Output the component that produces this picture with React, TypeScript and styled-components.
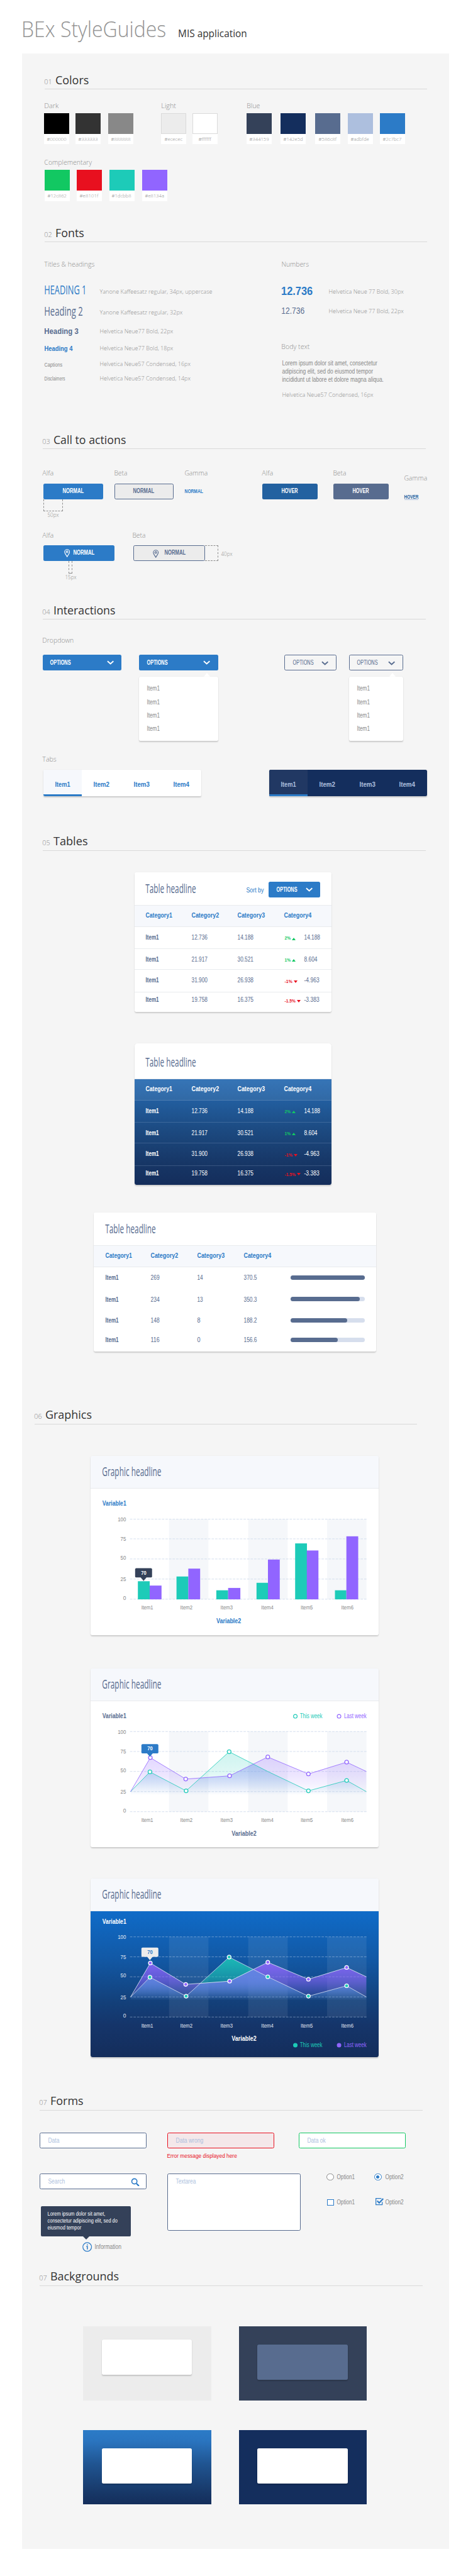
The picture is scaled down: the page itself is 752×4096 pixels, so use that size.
import React, { useLayoutEffect, useRef, useState } from "react";
import styled, { createGlobalStyle, css } from "styled-components";

/* ---------- tokens ---------- */

const c = {
  dark: "#344159",
  navy: "#142e5d",
  slate: "#586c8f",
  sky: "#adbfde",
  blue: "#2c7bc7",
  blueHover: "#2361a0",
  green: "#12c862",
  red: "#e8101f",
  teal: "#1dcbb8",
  violet: "#9165ff",
  ink: "#333333",
  gray: "#888888",
  label: "#8e8e8e",
  light: "#ececec",
  pale: "#f6f8fc",
  panel: "#f5f5f5",
};

const OPEN = '"Open Sans", sans-serif';
const HELV = '"Liberation Sans", Arial, sans-serif';
const PANEL_X = 56;
const shadow = "0 2px 3px rgba(0, 0, 0, 0.16), 0 0 2px rgba(0, 0, 0, 0.08)";

const Global = createGlobalStyle`
  html, body { margin: 0; padding: 0; background: #fff; }
  *, *::before, *::after { box-sizing: border-box; }
`;

/* ---------- text ---------- */

type Face = "open" | "helv";

interface TextProps {
  children: string;
  w: number;
  b: number;
  size?: number;
  ml?: number;
  color?: string;
  weight?: number;
  face?: Face;
}

/* The box ends on the text's baseline, so stacked lines are spaced baseline to baseline. */
const TextBox = styled.div<{
  $w: number;
  $b: number;
  $size: number;
  $ml: number;
  $color: string;
  $weight: number;
  $face: Face;
}>`
  flex: none;
  width: ${(p) => p.$w}px;
  height: ${(p) => p.$b}px;
  margin-left: ${(p) => p.$ml}px;
  line-height: ${(p) => 2 * (p.$b - (p.$face === "open" ? 0.388 : 0.3465) * p.$size)}px;
  font-family: ${(p) => (p.$face === "open" ? OPEN : HELV)};
  font-size: ${(p) => p.$size}px;
  font-weight: ${(p) => p.$weight};
  color: ${(p) => p.$color};
  white-space: nowrap;
`;

const Glyphs = styled.span`
  display: inline-block;
  transform-origin: 0 50%;
`;

/* Condenses the installed face to the width of the narrow cut; the shift takes up the first letter's side bearing. */
function Text({ children, w, b, size = 16, ml = 0, color = c.label, weight = 400, face = "open" }: TextProps) {
  const ref = useRef<HTMLSpanElement>(null);
  const [scale, setScale] = useState(1);
  useLayoutEffect(() => {
    const el = ref.current;
    if (!el || !el.parentElement) return;
    const box = el.parentElement.getBoundingClientRect().width;
    const own = el.getBoundingClientRect().width;
    if (own > 0) setScale((box / own) * scale * (1 + (0.04 * size) / w));
  }, [children, w]);
  const shift = -0.06 * size * scale;
  return (
    <TextBox $w={w} $b={b} $size={size} $ml={ml} $color={color} $weight={weight} $face={face}>
      <Glyphs ref={ref} style={{ transform: `translateX(${shift}px) scaleX(${scale})` }}>
        {children}
      </Glyphs>
    </TextBox>
  );
}

const Label = (p: TextProps) => <Text weight={300} {...p} />;
const Helv = (p: TextProps) => <Text face="helv" {...p} />;

/* ---------- page ---------- */

const Page = styled.main`
  zoom: ${752 / 1200};
  width: 1200px;
  height: 6535px;
  background: #fff;
`;

const PageHeader = styled.header`
  display: flex;
  align-items: flex-start;
  height: 136px;
  padding-left: 58px;
`;

const Panel = styled.div`
  width: 1084px;
  height: 6332px;
  margin-left: ${PANEL_X}px;
  padding-top: 47px;
  background: ${c.panel};
`;

const SectionBox = styled.section<{ $h: number }>`
  height: ${(p) => p.$h}px;
`;

const SectionHead = styled.div<{ $x: number }>`
  display: flex;
  align-items: flex-start;
  width: 971px;
  height: 44px;
  margin-left: ${(p) => p.$x - PANEL_X}px;
  border-bottom: 1px solid #d9d9d9;
`;

interface SectionProps {
  no: string;
  title: string;
  titleW: number;
  x: number;
  h: number;
  children: React.ReactNode;
}

function Section({ no, title, titleW, x, h, children }: SectionProps) {
  return (
    <SectionBox $h={h}>
      <SectionHead $x={x}>
        <Label w={19} b={31} size={18}>{no}</Label>
        <Text ml={10} w={titleW} b={31} size={29.5} color={c.ink}>{title}</Text>
      </SectionHead>
      {children}
    </SectionBox>
  );
}

const Row = styled.div<{ $x?: number; $h?: number; $mt?: number }>`
  display: flex;
  align-items: flex-start;
  padding-left: ${(p) => (p.$x ? p.$x - PANEL_X : 0)}px;
  margin-top: ${(p) => p.$mt ?? 0}px;
  ${(p) => p.$h && css`height: ${p.$h}px;`}
`;

const Column = styled.div<{ $w: number; $ml?: number; $mt?: number }>`
  flex: none;
  width: ${(p) => p.$w}px;
  margin-left: ${(p) => p.$ml ?? 0}px;
  margin-top: ${(p) => p.$mt ?? 0}px;
`;

/* ---------- colors ---------- */

const SwatchCard = styled.div<{ $gap: number }>`
  display: flex;
  flex: none;
  flex-direction: column;
  align-items: center;
  width: 64px;
  height: 79px;
  margin-left: ${(p) => p.$gap}px;
  background: #fff;
`;

const SwatchColor = styled.div<{ $color: string; $outlined: boolean }>`
  width: 64px;
  height: 53px;
  background: ${(p) => p.$color};
  border: ${(p) => (p.$outlined ? "1px solid #dadada" : "none")};
`;

interface SwatchDef {
  color: string;
  text?: string;
  w: number;
  gap?: number;
  outlined?: boolean;
}

const SwatchRow = styled.div`
  display: flex;
  margin-top: 13px;
`;

function Swatches({ label, labelW, items, w, ml = 0 }: { label: string; labelW: number; items: SwatchDef[]; w: number; ml?: number }) {
  return (
    <Column $w={w} $ml={ml}>
      <Label ml={1} w={labelW} b={16}>{label}</Label>
      <SwatchRow>
        {items.map((s) => (
          <SwatchCard key={s.color} $gap={s.gap ?? 0}>
            <SwatchColor $color={s.color} $outlined={!!s.outlined} />
            <Label w={s.w} b={18} size={12}>{s.text ?? s.color}</Label>
          </SwatchCard>
        ))}
      </SwatchRow>
    </Column>
  );
}

/* ---------- buttons ---------- */

type Kind = "alfa" | "beta" | "alfaHover" | "betaHover";

const kinds = {
  alfa: css`background: ${c.blue}; color: #fff;`,
  beta: css`background: ${c.light}; border: 1.6px solid ${c.slate};`,
  alfaHover: css`background: ${c.blueHover};`,
  betaHover: css`background: ${c.slate};`,
};

const ButtonBox = styled.button<{ $w: number; $kind: Kind }>`
  display: flex;
  align-items: flex-start;
  justify-content: center;
  width: ${(p) => p.$w}px;
  height: 40px;
  margin: 20px 0 0;
  padding: 0;
  border: 0;
  border-radius: 4px;
  ${(p) => kinds[p.$kind]}
`;

const PinSvg = styled.svg`
  flex: none;
  margin-top: 9px;
`;

const Pin = ({ color }: { color: string }) => (
  <PinSvg width="15" height="21" viewBox="0 0 15 21" fill="none" stroke={color} strokeWidth="1.8">
    <path d="M7.5 1.2C4 1.2 1.2 3.9 1.2 7.3c0 3.8 3.8 7.2 6.3 12.2 2.5-5 6.3-8.4 6.3-12.2 0-3.4-2.8-6.1-6.3-6.1z" />
    <circle cx="7.5" cy="7.2" r="2.3" />
  </PinSvg>
);

function Button({ kind, w, text, textW, pin, gap = 9 }: { kind: Kind; w: number; text: string; textW: number; pin?: boolean; gap?: number }) {
  const color = kind === "beta" ? c.slate : "#fff";
  const b = kind === "beta" ? 24 : 25;
  return (
    <ButtonBox $w={w} $kind={kind}>
      {pin && <Pin color={color} />}
      <Helv w={textW} b={b} size={16.5} weight={700} color={color} ml={pin ? gap : 0}>{text}</Helv>
    </ButtonBox>
  );
}

const GapBracket = styled.div<{ $w: number; $ml: number }>`
  width: ${(p) => p.$w}px;
  height: 31px;
  margin-left: ${(p) => p.$ml}px;
  border: 1px dashed ${c.label};
  border-top: 0;
`;

const HeightBracket = styled.div`
  flex: none;
  width: 33px;
  height: 40px;
  margin-top: 44px;
  border: 1px dashed ${c.label};
  border-left: 0;
`;

const LinkHover = styled.div`
  width: 36px;
  padding-bottom: 1px;
  border-bottom: 2px solid ${c.sky};
`;

/* ---------- dropdown ---------- */

const DropdownBox = styled.button<{ $w: number; $outline: boolean; $pad: number }>`
  display: flex;
  flex: none;
  align-items: flex-start;
  justify-content: space-between;
  width: ${(p) => p.$w}px;
  height: 40px;
  margin: 0;
  padding: 0 ${(p) => p.$pad}px 0 20px;
  border: ${(p) => (p.$outline ? `1.6px solid ${c.slate}` : "0")};
  border-radius: 4px;
  background: ${(p) => (p.$outline ? "transparent" : c.blue)};
`;

const ChevronSvg = styled.svg`
  flex: none;
  margin-top: 14px;
`;

function Dropdown({ w, outline = false, pad = 19 }: { w: number; outline?: boolean; pad?: number }) {
  const color = outline ? c.slate : "#fff";
  return (
    <DropdownBox $w={w} $outline={outline} $pad={pad}>
      <Helv w={52} b={outline ? 25 : 26} size={16} color={color} weight={outline ? 400 : 700}>OPTIONS</Helv>
      <ChevronSvg width="18" height="12" viewBox="0 0 18 12" fill="none" stroke={color} strokeWidth="3">
        <path d="M1.5 2 9 8.6 16.5 2" />
      </ChevronSvg>
    </DropdownBox>
  );
}

const MenuArrow = styled.div<{ $right: number }>`
  width: 0;
  height: 0;
  margin: 7px ${(p) => p.$right}px 0 auto;
  border: 9px solid transparent;
  border-top-width: 0;
  border-bottom: 11px solid #fff;
`;

const Menu = styled.div<{ $ml?: number }>`
  height: 163px;
  margin-left: ${(p) => p.$ml ?? 0}px;
  padding-left: 20px;
  border-radius: 4px;
  background: #fff;
  box-shadow: ${shadow};
`;

function OpenMenu({ right, ml }: { right: number; ml?: number }) {
  return (
    <>
      <MenuArrow $right={right} />
      <Menu $ml={ml}>
        {[36, 34, 34, 34].map((b, i) => (
          <Helv key={i} w={32} b={b} color={c.gray}>Item1</Helv>
        ))}
      </Menu>
    </>
  );
}

/* ---------- tabs ---------- */

const TabShadow = styled.div`
  flex: none;
  border-radius: 4px;
  box-shadow: ${shadow};
`;

const TabBar = styled.div<{ $dark: boolean }>`
  display: flex;
  width: 401px;
  height: 67px;
  overflow: hidden;
  border-radius: 4px;
  background: ${(p) => (p.$dark ? c.navy : "#fff")};
`;

const Tab = styled.div<{ $active: boolean; $dark: boolean }>`
  display: flex;
  align-items: flex-start;
  justify-content: center;
  width: ${(p) => (p.$active ? 98 : 101)}px;
  height: 67px;
  background: ${(p) => (p.$active ? (p.$dark ? "#213863" : c.pale) : "transparent")};
  border-bottom: ${(p) => (p.$active ? `6px solid ${c.blue}` : "0")};
`;

function Tabs({ dark = false }: { dark?: boolean }) {
  return (
    <TabShadow>
      <TabBar $dark={dark}>
        {["Item1", "Item2", "Item3", "Item4"].map((t, i) => (
          <Tab key={t} $active={i === 0} $dark={dark}>
            <Helv w={i === 0 ? 38 : 40} b={43} size={18} weight={700} color={dark ? c.sky : c.blue}>{t}</Helv>
          </Tab>
        ))}
      </TabBar>
    </TabShadow>
  );
}

/* ---------- tables ---------- */

const Card = styled.article<{ $x: number; $w: number; $mt: number; $top?: number }>`
  width: ${(p) => p.$w}px;
  margin: ${(p) => p.$mt}px 0 0 ${(p) => p.$x - PANEL_X}px;
  overflow: hidden;
  border-radius: ${(p) => p.$top ?? 5}px ${(p) => p.$top ?? 5}px 5px 5px;
  background: #fff;
  box-shadow: ${shadow};
`;

const CardHead = styled.div<{ $h: number; $tint?: boolean }>`
  display: flex;
  align-items: flex-start;
  height: ${(p) => p.$h}px;
  padding-left: 30px;
  background: ${(p) => (p.$tint ? c.pale : "#fff")};
  border-bottom: 1px solid #e9ebee;
`;

const HeadTools = styled.div`
  display: flex;
  align-items: flex-start;
  margin: 23px 0 0 127px;
`;

const TableBody = styled.div<{ $dark: boolean }>`
  background: ${(p) =>
    p.$dark ? "linear-gradient(#276bb2, #225e9f 20%, #1c4a81 48%, #173767 78%, #142d5b)" : "#fff"};
`;

const TableRow = styled.div<{ $h: number; $line: boolean; $head?: boolean; $dark: boolean }>`
  display: flex;
  align-items: flex-start;
  height: ${(p) => p.$h}px;
  padding-left: 30px;
  background: ${(p) => (p.$head ? (p.$dark ? "rgba(255,255,255,0.07)" : c.pale) : "transparent")};
  border-bottom: ${(p) =>
    p.$line ? `1px solid ${p.$dark ? "rgba(173,191,222,0.22)" : "#e9ebee"}` : "0"};
`;

const Cell = styled.div<{ $w: number }>`
  display: flex;
  flex: none;
  align-items: flex-start;
  width: ${(p) => p.$w}px;
`;

const Triangle = styled.div<{ $up: boolean; $mt: number }>`
  width: 0;
  height: 0;
  margin: ${(p) => p.$mt}px 0 0 3px;
  border: 5px solid transparent;
  ${(p) =>
    p.$up
      ? css`border-top-width: 0; border-bottom: 7px solid ${c.green};`
      : css`border-bottom-width: 0; border-top: 7px solid ${c.red};`}
`;

const categories = ["Category1", "Category2", "Category3", "Category4"];
const columnWidths = [115, 118, 118, 50];
const rowHeights = [55, 53, 57, 49];
const rowBaselines = [32, 32, 33, 25];

function HeadCells({ dark }: { dark: boolean }) {
  return (
    <TableRow $h={55} $line $head $dark={dark}>
      {categories.map((t, i) => (
        <Cell key={t} $w={columnWidths[i]}>
          <Helv w={i === 0 ? 67 : 69} b={31} size={17} weight={700} color={dark ? "#fff" : c.blue}>{t}</Helv>
        </Cell>
      ))}
    </TableRow>
  );
}

const trendRows = [
  { a: "12.736", b: "14.188", pct: "2%", pw: 15, up: true, v: "14.188", vw: 40 },
  { a: "21.917", b: "30.521", pct: "1%", pw: 15, up: true, v: "8.604", vw: 33 },
  { a: "31.900", b: "26.938", pct: "-1%", pw: 19, up: false, v: "-4.963", vw: 38 },
  { a: "19.758", b: "16.375", pct: "-1.5%", pw: 27, up: false, v: "-3.383", vw: 38 },
];

function TrendTable({ dark = false }: { dark?: boolean }) {
  const num = dark ? "#fff" : c.slate;
  return (
    <TableBody $dark={dark}>
      <HeadCells dark={dark} />
      {trendRows.map((r, i) => (
        <TableRow key={r.a} $h={rowHeights[i]} $line={i < 3} $dark={dark}>
          <Cell $w={115}><Helv w={33} b={rowBaselines[i]} weight={700} color={num}>Item1</Helv></Cell>
          <Cell $w={118}><Helv w={40} b={rowBaselines[i]} color={num}>{r.a}</Helv></Cell>
          <Cell $w={119}><Helv w={40} b={rowBaselines[i]} color={num}>{r.b}</Helv></Cell>
          <Cell $w={49}>
            <Helv w={r.pw} b={rowBaselines[i] + 1} size={12} weight={700} color={r.up ? c.green : c.red}>{r.pct}</Helv>
            <Triangle $up={r.up} $mt={rowBaselines[i] - 6} />
          </Cell>
          <Helv w={r.vw} b={rowBaselines[i]} color={num}>{r.v}</Helv>
        </TableRow>
      ))}
    </TableBody>
  );
}

const Track = styled.div<{ $mt: number }>`
  width: 187px;
  height: 11px;
  margin-top: ${(p) => p.$mt}px;
  border-radius: 6px;
  background: #d6deed;
`;

const Fill = styled.div`
  height: 11px;
  border-radius: 6px;
  background: ${c.slate};
`;

const barRows = [
  { a: "269", aw: 22, b: "14", bw: 14, v: "370.5", fill: 100 },
  { a: "234", aw: 22, b: "13", bw: 14, v: "350.3", fill: 93.3 },
  { a: "148", aw: 22, b: "8", bw: 7.5, v: "188.2", fill: 76.5 },
  { a: "116", aw: 22, b: "0", bw: 7.5, v: "156.6", fill: 63.8 },
];

function BarTable() {
  return (
    <TableBody $dark={false}>
      <HeadCells dark={false} />
      {barRows.map((r, i) => (
        <TableRow key={r.a} $h={rowHeights[i]} $line={false} $dark={false}>
          <Cell $w={115}><Helv w={33} b={rowBaselines[i]} weight={700} color={c.slate}>Item1</Helv></Cell>
          <Cell $w={118}><Helv w={r.aw} b={rowBaselines[i]} color={c.slate}>{r.a}</Helv></Cell>
          <Cell $w={118}><Helv w={r.bw} b={rowBaselines[i]} color={c.slate}>{r.b}</Helv></Cell>
          <Cell $w={119}><Helv w={33} b={rowBaselines[i]} color={c.slate}>{r.v}</Helv></Cell>
          <Track $mt={rowBaselines[i] - 12}>
            <Fill style={{ width: `${r.fill}%` }} />
          </Track>
        </TableRow>
      ))}
    </TableBody>
  );
}

/* ---------- charts ---------- */

const ChartSvg = styled.svg<{ $dark?: boolean }>`
  display: block;
  font-family: ${HELV};
  font-size: 15.5px;
  background: ${(p) =>
    p.$dark ? "linear-gradient(#0f6bc8, #1259a6 32%, #13407a 62%, #15356a 78%, #142d5b)" : "#fff"};
`;

interface LabelProps {
  x: number;
  y: number;
  w: number;
  color: string;
  size?: number;
  bold?: boolean;
  t: string;
}

const ChartText = ({ x, y, w, color, size = 15.5, bold, t }: LabelProps) => (
  <text x={x} y={y} fill={color} fontSize={size} fontWeight={bold ? 700 : 400} textLength={w} lengthAdjust="spacingAndGlyphs">
    {t}
  </text>
);

const axis = [
  { t: "100", w: 21 },
  { t: "75", w: 14 },
  { t: "50", w: 14 },
  { t: "25", w: 14 },
  { t: "0", w: 7.5 },
];
const itemX = [128.7, 227.6, 329.7, 433, 533, 636];

interface GridProps {
  lines: number[];
  labels: number[];
  itemY: number;
  text: string;
  line: string;
  band: string;
}

const Grid = ({ lines, labels, itemY, text, line, band }: GridProps) => (
  <g>
    {[199, 400, 600].map((x) => (
      <rect key={x} x={x} y={lines[0]} width="100" height={lines[4] - lines[0]} fill={band} />
    ))}
    {lines.map((y) => (
      <path key={y} d={`M100 ${y}H700`} stroke={line} strokeWidth="1.4" strokeDasharray="6 3" />
    ))}
    {axis.map((a, i) => (
      <ChartText key={a.t} x={90 - a.w} y={labels[i]} w={a.w} color={text} t={a.t} />
    ))}
    {itemX.map((x, i) => (
      <ChartText key={x} x={x} y={itemY} w={i ? 31 : 30} color={text} t={`Item${i + 1}`} />
    ))}
  </g>
);

const Bubble = ({ x, y, fill, color }: { x: number; y: number; fill: string; color: string }) => (
  <g>
    <rect x={x} y={y} width="43" height="23.6" rx="3" fill={fill} />
    <path d={`M${x + 14} ${y + 23}h15l-7.5 9z`} fill={fill} />
    <ChartText x={x + 15} y={y + 16.2} w={13.5} size={13} bold color={color} t="70" />
  </g>
);

const bars: [number, number, number, string][] = [
  [120, 235, 30, c.teal],
  [150, 246, 30, c.violet],
  [218, 223, 30, c.teal],
  [248, 203, 30, c.violet],
  [319, 258, 30, c.teal],
  [349, 252, 31, c.violet],
  [421, 239, 29, c.teal],
  [450, 180, 30, c.violet],
  [519, 139, 30, c.teal],
  [548.6, 157, 29.5, c.violet],
  [620, 258, 29, c.teal],
  [649, 121, 30, c.violet],
];

function BarChart() {
  return (
    <ChartSvg width="730" height="371" viewBox="0 0 730 371">
      <ChartText x={30} y={43.5} w={60.5} size={16.5} bold color={c.blue} t="Variable1" />
      <Grid
        lines={[77.5, 127.5, 178.5, 229.5, 280.5]}
        labels={[83, 132.5, 180, 234.5, 282]}
        itemY={307}
        text={c.gray}
        line="#cfdaec"
        band="#f5f7fa"
      />
      {bars.map(([x, y, w, fill]) => (
        <rect key={x} x={x} y={y} width={w} height={281 - y} fill={fill} />
      ))}
      <Bubble x={113} y={202} fill={c.dark} color="#fff" />
      <ChartText x={319} y={341} w={63} size={16.5} bold color={c.blue} t="Variable2" />
    </ChartSvg>
  );
}

type Pt = [number, number];
const lastWeek: Pt[] = [[101.6, 229.4], [151.6, 143.3], [241.4, 197.6], [352.7, 189.4], [449.6, 141.5], [552.7, 184.7], [649.6, 154.7], [699.6, 178.3]];
const thisWeek: Pt[] = [[101.6, 229.4], [150.6, 179.4], [242.4, 227.6], [351.6, 128.3], [449.6, 178.3], [552.7, 227.6], [649.6, 201.1], [699.6, 229.4]];
const toLine = (p: Pt[]) => "M" + p.map((q) => q.join(" ")).join("L");
const toArea = (p: Pt[]) => `${toLine(p)}V240H101.6Z`;

function LineChart({ dark = false }: { dark?: boolean }) {
  const id = dark ? "d" : "l";
  const title = dark ? "#fff" : c.slate;
  const dy = dark ? -12 : 0;
  const legendY = dark ? 345 : 43.6;
  const dot = (color: string, p: Pt, key?: number) => (
    <circle key={key} cx={p[0]} cy={p[1]} r="4.7" fill={dark ? color : "#fff"} stroke={dark ? "#fff" : color} strokeWidth="2" />
  );
  const fade = (name: string, color: string, from: number, y1: number) => (
    <linearGradient id={name + id} gradientUnits="userSpaceOnUse" x1="0" x2="0" y1={y1} y2="238">
      <stop offset="0" stopColor={color} stopOpacity={from} />
      <stop offset="0.5" stopColor={color} stopOpacity={from * 0.62} />
      <stop offset="1" stopColor={color} stopOpacity="0" />
    </linearGradient>
  );
  return (
    <ChartSvg $dark={dark} width="730" height="371" viewBox="0 0 730 371">
      <defs>
        {fade("v", c.violet, dark ? 0.88 : 0.26, 140)}
        {fade("t", c.teal, dark ? 0.85 : 0.22, 128)}
        {fade("o", dark ? "#5e86e0" : "#5b8fe8", dark ? 0.95 : 0.24, 145)}
        <clipPath id={"c" + id}>
          <path d={toArea(thisWeek)} />
        </clipPath>
      </defs>
      <ChartText x={30} y={43.6 + dy} w={60.5} size={16.5} bold color={title} t="Variable1" />
      <g transform={`translate(0 ${dy})`}>
        <Grid
          lines={[77, 127.6, 178.3, 229.4, 280.4]}
          labels={[83, 132.6, 180, 235, 282]}
          itemY={307}
          text={dark ? "#e3e8f2" : c.gray}
          line={dark ? "rgba(190,208,236,0.55)" : "#cfdaec"}
          band={dark ? "rgba(255,255,255,0.075)" : "#f5f7fa"}
        />
        <path d={toArea(thisWeek)} fill={`url(#t${id})`} />
        <path d={toArea(lastWeek)} fill={`url(#v${id})`} />
        <path d={toArea(lastWeek)} fill={`url(#o${id})`} clipPath={`url(#c${id})`} />
        <path d={toLine(thisWeek)} fill="none" stroke={dark ? "#d5def2" : c.teal} strokeWidth="1.3" />
        <path d={toLine(lastWeek)} fill="none" stroke={dark ? "#e6ebf7" : c.violet} strokeWidth="1.3" />
        {thisWeek.slice(1, -1).map((p, i) => (i === 3 && !dark ? null : dot(c.teal, p, i)))}
        {lastWeek.slice(1, -1).map((p, i) => dot(c.violet, p, i))}
        <ChartText x={357.8} y={341} w={63} size={16.5} bold color={title} t="Variable2" />
      </g>
      <Bubble x={129} y={dark ? 92 : 109} fill={dark ? c.light : c.blue} color={dark ? c.blue : "#fff"} />
      <circle cx="519.5" cy={legendY - 5.2} r="4.7" fill={dark ? c.teal : "#fff"} stroke={c.teal} strokeWidth="1.8" />
      <ChartText x={531} y={legendY} w={57} size={16} color={c.teal} t="This week" />
      <circle cx="630.4" cy={legendY - 5.2} r="4.7" fill={dark ? c.violet : "#fff"} stroke={c.violet} strokeWidth="1.8" />
      <ChartText x={643} y={legendY} w={57} size={16} color={c.violet} t="Last week" />
    </ChartSvg>
  );
}

/* ---------- forms ---------- */

const Field = styled.div<{ $w: number; $h?: number; $ml?: number; $border?: string; $bg?: string }>`
  display: flex;
  flex: none;
  align-items: flex-start;
  width: ${(p) => p.$w}px;
  height: ${(p) => p.$h ?? 40}px;
  margin-left: ${(p) => p.$ml ?? 0}px;
  padding-left: 21px;
  border: 1.6px solid ${(p) => p.$border ?? c.slate};
  border-radius: 4px;
  background: ${(p) => p.$bg ?? "#fff"};
`;

const FieldIcon = styled.svg`
  margin: 9px 0 0 167px;
`;

const Choice = styled.label<{ $w: number; $ml?: number }>`
  display: flex;
  flex: none;
  align-items: flex-start;
  width: ${(p) => p.$w}px;
  margin-left: ${(p) => p.$ml ?? 0}px;
`;

const Radio = styled.span<{ $on: boolean }>`
  display: flex;
  flex: none;
  align-items: center;
  justify-content: center;
  width: 18px;
  height: 18px;
  border: 2px solid ${(p) => (p.$on ? c.blue : c.gray)};
  border-radius: 50%;
  background: #fff;
  &::after {
    content: "";
    width: 8px;
    height: 8px;
    border-radius: 50%;
    background: ${(p) => (p.$on ? c.blue : "transparent")};
  }
`;

const Checkbox = styled.span`
  flex: none;
  width: 17px;
  height: 17px;
  margin: 2px 0 0 1px;
  border: 2px solid ${c.blue};
  background: #fff;
`;

const CheckedSvg = styled.svg`
  flex: none;
  margin-left: 3px;
`;

const Tooltip = styled.div`
  width: 229px;
  height: 77px;
  margin: 43px 0 0 3px;
  padding-left: 18px;
  border-radius: 3px;
  background: ${c.dark};
`;

const TooltipArrow = styled.div`
  width: 0;
  height: 0;
  margin-left: 111px;
  border: 8px solid transparent;
  border-bottom-width: 0;
  border-top: 9px solid ${c.dark};
`;

/* ---------- backgrounds ---------- */

const Sample = styled.div<{ $bg: string; $ml?: number; $mt?: number }>`
  flex: none;
  width: 325px;
  height: 189px;
  margin-left: ${(p) => p.$ml ?? 0}px;
  padding: ${(p) => p.$mt ?? 47}px 0 0 47px;
  background: ${(p) => p.$bg};
`;

const SampleCard = styled.div<{ $bg?: string }>`
  width: 229px;
  height: 89px;
  border-radius: 4px;
  background: ${(p) => p.$bg ?? "#fff"};
  box-shadow: ${shadow};
`;

/* ---------- app ---------- */

export default function App() {
  return (
    <>
      <Global />
      <Page>
        <PageHeader>
          <Text w={365} b={94.5} size={55} weight={300} color="#949494">BEx StyleGuides</Text>
          <Text ml={31} w={174} b={94.5} size={26.5} color={c.ink}>MIS application</Text>
        </PageHeader>
        <Panel>
          <Section no="01" title="Colors" titleW={84} x={113} h={388}>
            <Row $x={112} $mt={31}>
              <Swatches label="Dark" labelW={36} w={227} items={[
                { color: "#000000", w: 49 },
                { color: "#333333", w: 49, gap: 16 },
                { color: "#888888", w: 49, gap: 19 },
              ]} />
              <Swatches label="Light" labelW={37} w={144} ml={70} items={[
                { color: "#ececec", w: 45, outlined: true },
                { color: "#ffffff", w: 32, gap: 16, outlined: true },
              ]} />
              <Swatches label="Blue" labelW={33} w={402} ml={73} items={[
                { color: "#344159", w: 49 },
                { color: "#142e5d", w: 49, gap: 22 },
                { color: "#586c8f", w: 45, gap: 24 },
                { color: "#adbfde", w: 46, gap: 18 },
                { color: "#2c7bc7", w: 47, gap: 18 },
              ]} />
            </Row>
            <Row $x={113} $mt={36}>
              <Swatches label="Complementary" labelW={120} w={312} items={[
                { color: "#12c862", w: 48 },
                { color: "#e8101f", w: 47, gap: 18 },
                { color: "#1dcbb8", w: 49, gap: 18 },
                { color: "#9165ff", text: "#e8134a", w: 48, gap: 20 },
              ]} />
            </Row>
          </Section>

          <Section no="02" title="Fonts" titleW={72} x={113} h={525}>
            <Row $x={113}>
              <Column $w={602}>
                <Label w={127} b={63}>Titles &amp; headings</Label>
                <Row $h={53}>
                  <Text w={106} b={70.5} size={32} weight={500} color={c.blue}>HEADING 1</Text>
                  <Label ml={34} w={285} b={68} size={15}>Yanone Kaffeesatz regular, 34px, uppercase</Label>
                </Row>
                <Row $h={53}>
                  <Text w={97} b={71} size={32} weight={500} color={c.slate}>Heading 2</Text>
                  <Label ml={43} w={210} b={68} size={15}>Yanone Kaffeesatz regular, 32px</Label>
                </Row>
                <Row $h={43}>
                  <Helv w={86} b={64.5} size={21.5} weight={700} color={c.slate}>Heading 3</Helv>
                  <Label ml={54} w={186} b={63} size={15}>Helvetica Neue77 Bold, 22px</Label>
                </Row>
                <Row $h={40}>
                  <Helv w={71} b={64} size={18} weight={700} color={c.blue}>Heading 4</Helv>
                  <Label ml={69} w={186} b={63} size={15}>Helvetica Neue77 Bold, 18px</Label>
                </Row>
                <Row $h={37}>
                  <Helv w={45} b={63.5} size={15} color={c.gray}>Captions</Helv>
                  <Label ml={95} w={230} b={63} size={15}>Helvetica Neue57 Condensed, 16px</Label>
                </Row>
                <Row>
                  <Helv w={52} b={63} size={13} color={c.gray}>Disclaimers</Helv>
                  <Label ml={88} w={230} b={63} size={15}>Helvetica Neue57 Condensed, 14px</Label>
                </Row>
              </Column>
              <Column $w={320}>
                <Label w={69} b={63}>Numbers</Label>
                <Row $h={50}>
                  <Helv w={79} b={71.5} size={29} weight={700} color={c.blue}>12.736</Helv>
                  <Label ml={41} w={190} b={68} size={15}>Helvetica Neue 77 Bold, 30px</Label>
                </Row>
                <Row $h={50}>
                  <Helv w={58} b={70} size={22} color={c.slate}>12.736</Helv>
                  <Label ml={62} w={190} b={68} size={15}>Helvetica Neue 77 Bold, 22px</Label>
                </Row>
                <Label w={71} b={108}>Body text</Label>
                <Helv ml={2} w={241} b={43} color={c.gray}>Lorem ipsum dolor sit amet, consectetur</Helv>
                <Helv ml={2} w={230} b={20} color={c.gray}>adipiscing elit, sed do eiusmod tempor</Helv>
                <Helv ml={2} w={257} b={20} color={c.gray}>incididunt ut labore et dolore magna aliqua.</Helv>
                <Label ml={1} w={231} b={40} size={15}>Helvetica Neue57 Condensed, 16px</Label>
              </Column>
            </Row>
          </Section>

          <Section no="03" title="Call to actions" titleW={183} x={109} h={432}>
            <Row $x={110} $h={200}>
              <Column $w={180}>
                <Label ml={-1} w={28} b={67}>Alfa</Label>
                <Button kind="alfa" w={152} text="NORMAL" textW={53} />
                <GapBracket $w={50} $ml={0} />
                <Label ml={11} w={28} b={15} size={13}>50px</Label>
              </Column>
              <Column $w={179}>
                <Label w={33} b={67}>Beta</Label>
                <Button kind="beta" w={151} text="NORMAL" textW={53} />
              </Column>
              <Column $w={197}>
                <Label w={58} b={67}>Gamma</Label>
                <Helv w={46} b={45} size={14.5} weight={700} color={c.blue}>NORMAL</Helv>
              </Column>
              <Column $w={180}>
                <Label ml={-1} w={28} b={67}>Alfa</Label>
                <Button kind="alfaHover" w={140} text="HOVER" textW={41} />
              </Column>
              <Column $w={180}>
                <Label w={33} b={67}>Beta</Label>
                <Button kind="betaHover" w={140} text="HOVER" textW={41} />
              </Column>
              <Column $w={58}>
                <Label w={58} b={81}>Gamma</Label>
                <LinkHover>
                  <Helv w={36} b={45} size={14.5} weight={700} color={c.blueHover}>HOVER</Helv>
                </LinkHover>
              </Column>
            </Row>
            <Row $x={110}>
              <Column $w={229}>
                <Label ml={-1} w={28} b={24}>Alfa</Label>
                <Button kind="alfa" w={181} text="NORMAL" textW={53} pin />
                <GapBracket $w={10} $ml={64} />
                <Label ml={56} w={28} b={15} size={13}>15px</Label>
              </Column>
              <Column $w={181}>
                <Label ml={-2} w={33} b={24}>Beta</Label>
                <Button kind="beta" w={181} text="NORMAL" textW={53} pin gap={14} />
              </Column>
              <HeightBracket />
              <Label ml={8} w={28} b={70} size={13}>40px</Label>
            </Row>
          </Section>

          <Section no="04" title="Interactions" titleW={156} x={109} h={587}>
            <Row $x={109}>
              <Label w={79} b={59}>Dropdown</Label>
            </Row>
            <Row $x={108} $mt={30} $h={221}>
              <Dropdown w={200} />
              <Column $w={200} $ml={45}>
                <Dropdown w={200} />
                <OpenMenu right={20} />
              </Column>
              <Column $w={132} $ml={169}>
                <Dropdown w={132} outline />
              </Column>
              <Column $w={138} $ml={31}>
                <Dropdown w={138} outline />
                <OpenMenu right={19} ml={1} />
              </Column>
            </Row>
            <Row $x={109}>
              <Label w={35} b={52}>Tabs</Label>
            </Row>
            <Row $x={110} $mt={20}>
              <Tabs />
              <Column $w={401} $ml={172}>
                <Tabs dark />
              </Column>
            </Row>
          </Section>

          <Section no="05" title="Tables" titleW={86} x={109} h={1455}>
            <Card $x={341} $w={500} $mt={55}>
              <CardHead $h={84}>
                <Text w={127} b={53} size={31.5} weight={500} color={c.slate}>Table headline</Text>
                <HeadTools>
                  <Helv w={44} b={27} size={17} color={c.blue}>Sort by</Helv>
                  <Column $w={131} $ml={13}>
                    <Dropdown w={131} />
                  </Column>
                </HeadTools>
              </CardHead>
              <TrendTable />
            </Card>
            <Card $x={341} $w={500} $mt={80} $top={8}>
              <CardHead $h={91}>
                <Text w={127} b={60} size={31.5} weight={500} color={c.slate}>Table headline</Text>
              </CardHead>
              <TrendTable dark />
            </Card>
            <Card $x={238} $w={716} $mt={70}>
              <CardHead $h={84}>
                <Text w={127} b={53} size={31.5} weight={500} color={c.slate}>Table headline</Text>
              </CardHead>
              <BarTable />
            </Card>
          </Section>

          <Section no="06" title="Graphics" titleW={117} x={87} h={1741}>
            <Card $x={230} $w={730} $mt={81}>
              <CardHead $h={83} $tint>
                <Text w={149} b={53} size={32} weight={500} color={c.slate}>Graphic headline</Text>
              </CardHead>
              <BarChart />
            </Card>
            <Card $x={230} $w={730} $mt={84}>
              <CardHead $h={83} $tint>
                <Text w={149} b={53} size={32} weight={500} color={c.slate}>Graphic headline</Text>
              </CardHead>
              <LineChart />
            </Card>
            <Card $x={230} $w={730} $mt={79}>
              <CardHead $h={83} $tint>
                <Text w={149} b={53} size={32} weight={500} color={c.slate}>Graphic headline</Text>
              </CardHead>
              <LineChart dark />
            </Card>
          </Section>

          <Section no="07" title="Forms" titleW={83} x={101} h={445}>
            <Row $x={100} $mt={56} $h={104}>
              <Field $w={272}>
                <Helv w={28} b={25} size={16.5} color={c.sky}>Data</Helv>
              </Field>
              <Column $w={272} $ml={52}>
                <Field $w={272} $border={c.red} $bg="#f4e8ea">
                  <Helv w={69} b={25} size={16.5} color={c.sky}>Data wrong</Helv>
                </Field>
                <Helv w={177} b={25} size={15.5} color={c.red}>Error message displayed here</Helv>
              </Column>
              <Field $w={272} $ml={62} $border={c.green}>
                <Helv w={46} b={25} size={16.5} color={c.sky}>Data ok</Helv>
              </Field>
            </Row>
            <Row $x={100}>
              <Column $w={272}>
                <Field $w={272}>
                  <Helv w={42} b={25} size={16.5} color={c.sky}>Search</Helv>
                  <FieldIcon width="22" height="22" viewBox="0 0 22 22" fill="none" stroke={c.blue}>
                    <circle cx="9" cy="8.8" r="6.6" strokeWidth="2.6" />
                    <path d="M14 14l1.8 1.8" strokeWidth="2" />
                    <path d="M15.6 15.6l4 4" strokeWidth="3.6" strokeLinecap="round" />
                  </FieldIcon>
                </Field>
                <Tooltip>
                  <Helv w={146} b={24} size={14} color="#fff">Lorem ipsum dolor sit amet,</Helv>
                  <Helv w={177} b={18} size={14} color="#fff">consectetur adipiscing elit, sed do</Helv>
                  <Helv w={85} b={18} size={14} color="#fff">eiusmod tempor</Helv>
                </Tooltip>
                <TooltipArrow />
                <Row $mt={6}>
                  <Column $w={25} $ml={109}>
                    <svg width="25" height="25" viewBox="0 0 25 25" fill="none" stroke={c.blue}>
                      <circle cx="12.2" cy="12.5" r="11" strokeWidth="2" />
                      <path d="M12.6 5.8v2.6" strokeWidth="2.6" />
                      <path d="M10 11h2.6v7.6" strokeWidth="2.4" />
                    </svg>
                  </Column>
                  <Helv ml={7} w={67} b={19} color={c.gray}>Information</Helv>
                </Row>
              </Column>
              <Field $w={339} $h={145} $ml={52}>
                <Helv w={50} b={25} size={16.5} color={c.sky}>Textarea</Helv>
              </Field>
              <Column $w={190} $ml={66}>
                <Row $h={63}>
                  <Choice $w={121}>
                    <Radio $on={false} />
                    <Helv ml={9} w={45} b={15} color={c.gray}>Option1</Helv>
                  </Choice>
                  <Choice $w={70}>
                    <Radio $on />
                    <Helv ml={10} w={46} b={15} color={c.gray}>Option2</Helv>
                  </Choice>
                </Row>
                <Row>
                  <Choice $w={121}>
                    <Checkbox />
                    <Helv ml={9} w={45} b={16} color={c.gray}>Option1</Helv>
                  </Choice>
                  <Choice $w={75}>
                    <CheckedSvg width="22" height="18" viewBox="0 0 22 18" fill="none" stroke={c.blue}>
                      <path d="M15 1H1v16h16v-7" strokeWidth="2" />
                      <path d="M4.4 7.2l5 5.2L19.6 1.6" strokeWidth="3.4" />
                    </CheckedSvg>
                    <Helv ml={3} w={46} b={16} color={c.gray}>Option2</Helv>
                  </Choice>
                </Row>
              </Column>
            </Row>
          </Section>

          <Section no="07" title="Backgrounds" titleW={173} x={101} h={712}>
            <Row $x={211} $mt={102}>
              <Sample $bg="#ececec" $mt={34}><SampleCard /></Sample>
              <Sample $bg={c.dark} $ml={70}><SampleCard $bg={c.slate} /></Sample>
            </Row>
            <Row $x={211} $mt={75}>
              <Sample $bg={`linear-gradient(${c.blue}, #2a74bf 15%, #205592 45%, #173767 85%, #142e5b)`}><SampleCard /></Sample>
              <Sample $bg={c.navy} $ml={70}><SampleCard /></Sample>
            </Row>
          </Section>
        </Panel>
      </Page>
    </>
  );
}
